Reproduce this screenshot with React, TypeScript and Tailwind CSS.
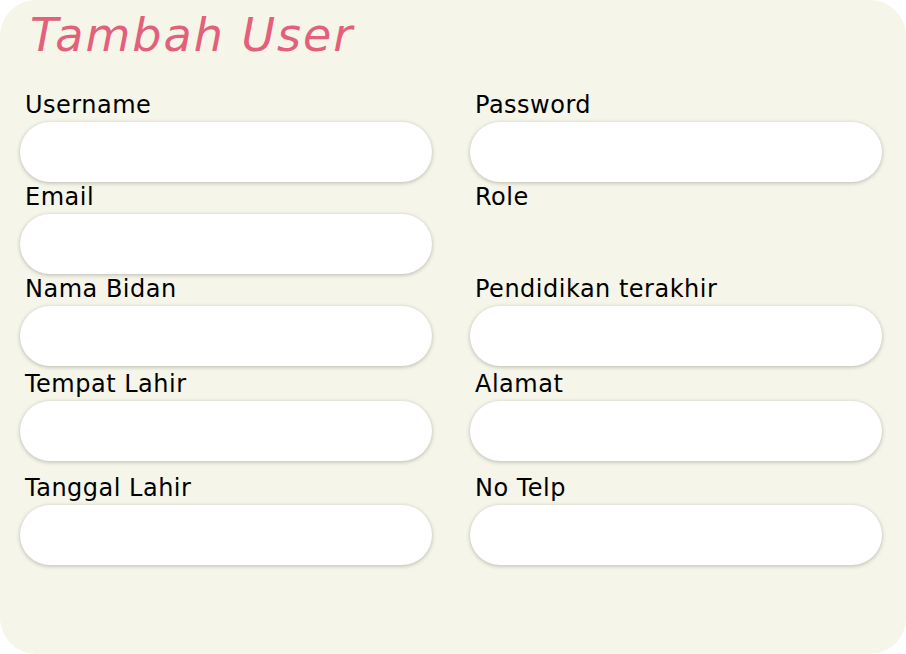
import { useState } from "react";

type Field = { label: string; name: string; type?: string; hidden?: boolean };

const rows: { mt: string; fields: Field[] }[] = [
  { mt: "mt-0", fields: [{ label: "Username", name: "username" }, { label: "Password", name: "password", type: "password" }] },
  { mt: "mt-0", fields: [{ label: "Email", name: "email", type: "email" }, { label: "Role", name: "role", hidden: true }] },
  { mt: "mt-0", fields: [{ label: "Nama Bidan", name: "nama" }, { label: "Pendidikan terakhir", name: "pendidikan" }] },
  { mt: "mt-[3px]", fields: [{ label: "Tempat Lahir", name: "tempat" }, { label: "Alamat", name: "alamat" }] },
  { mt: "mt-[12px]", fields: [{ label: "Tanggal Lahir", name: "tanggal" }, { label: "No Telp", name: "telp" }] },
];

export default function App() {
  const [form, setForm] = useState<Record<string, string>>({});

  return (
    <div className="w-[906px] h-[654px] bg-white font-['DejaVu_Sans',sans-serif]">
      <div className="h-full rounded-[36px] bg-[#f5f5e9] pl-[20px] pr-[24px]">
        <h1 className="h-[90px] pl-[10px] pt-[7px] text-[46px] leading-[56px] tracking-[2px] italic font-medium text-[#e3607a]">
          Tambah User
        </h1>
        {rows.map((row, i) => (
          <div key={i} className={`grid grid-cols-2 gap-x-[38px] ${row.mt}`}>
            {row.fields.map((f) => (
              <div key={f.name} className="flex flex-col">
                <label className="pl-[5px] text-[24px] leading-[30px] tracking-[0.5px] text-black">{f.label}</label>
                {f.hidden ? (
                  <div className="h-[62px]" />
                ) : (
                  <input
                    type={f.type ?? "text"}
                    value={form[f.name] ?? ""}
                    onChange={(e) => setForm({ ...form, [f.name]: e.target.value })}
                    className="mt-[2px] h-[60px] rounded-full bg-white px-6 text-[18px] outline-none shadow-[0_1px_4px_rgba(0,0,0,0.25)]"
                  />
                )}
              </div>
            ))}
          </div>
        ))}
      </div>
    </div>
  );
}
